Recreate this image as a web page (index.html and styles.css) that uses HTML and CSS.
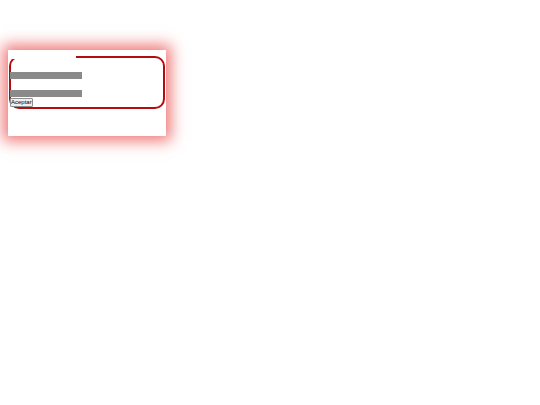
FILE: index.html
```html
<!DOCTYPE html>
<html>
<head>
<meta charset="utf-8">
<link rel="stylesheet" href="styles.css">
</head>
<body>
<div class="box">
  <form class="form">
    <fieldset class="group">
      <legend class="group-title"></legend>
      <div class="bar bar-first"></div>
      <div class="bar bar-second"></div>
      <button type="button" class="btn">Aceptar</button>
    </fieldset>
  </form>
</div>
</body>
</html>
```
FILE: styles.css
```css
html, body {
  margin: 0;
  padding: 0;
  background: #ffffff;
}
html {
  height: 100%;
}
body {
  min-height: 100%;
  box-sizing: border-box;
  padding: 50px 0 0 8px;
  font-family: "Liberation Sans", Arial, sans-serif;
}
.box {
  width: 158px;
  height: 86px;
  background: #ffffff;
  box-shadow: 0 0 14px 5px rgba(230, 30, 30, 0.6);
  overflow: hidden;
}
.form {
  margin: 5px 0 0;
  padding: 0;
}
.group {
  margin: 0 1px;
  padding: 0 0 0 1px;
  border: 2px solid #b50d0d;
  border-radius: 10px;
  min-width: 0;
  display: flex;
  flex-direction: column;
  align-items: flex-start;
}
.group-title {
  width: 66px;
  height: 4px;
  padding: 0;
  margin: 0 0 0 -2px;
}
.bar {
  width: 72px;
  height: 7px;
  background: #8a8a8a;
  margin-left: -2px;
}
.bar-first {
  margin-top: 13px;
}
.bar-second {
  margin-top: 11px;
}
.btn {
  margin: 1px 0 0 -2px;
  padding: 0;
  font-family: "Liberation Sans", Arial, sans-serif;
  font-size: 6px;
  line-height: 7px;
  height: 9px;
  color: #000;
  background: #efefef;
  border: 1px solid #8f8f8f;
  border-radius: 1px;
}
```
